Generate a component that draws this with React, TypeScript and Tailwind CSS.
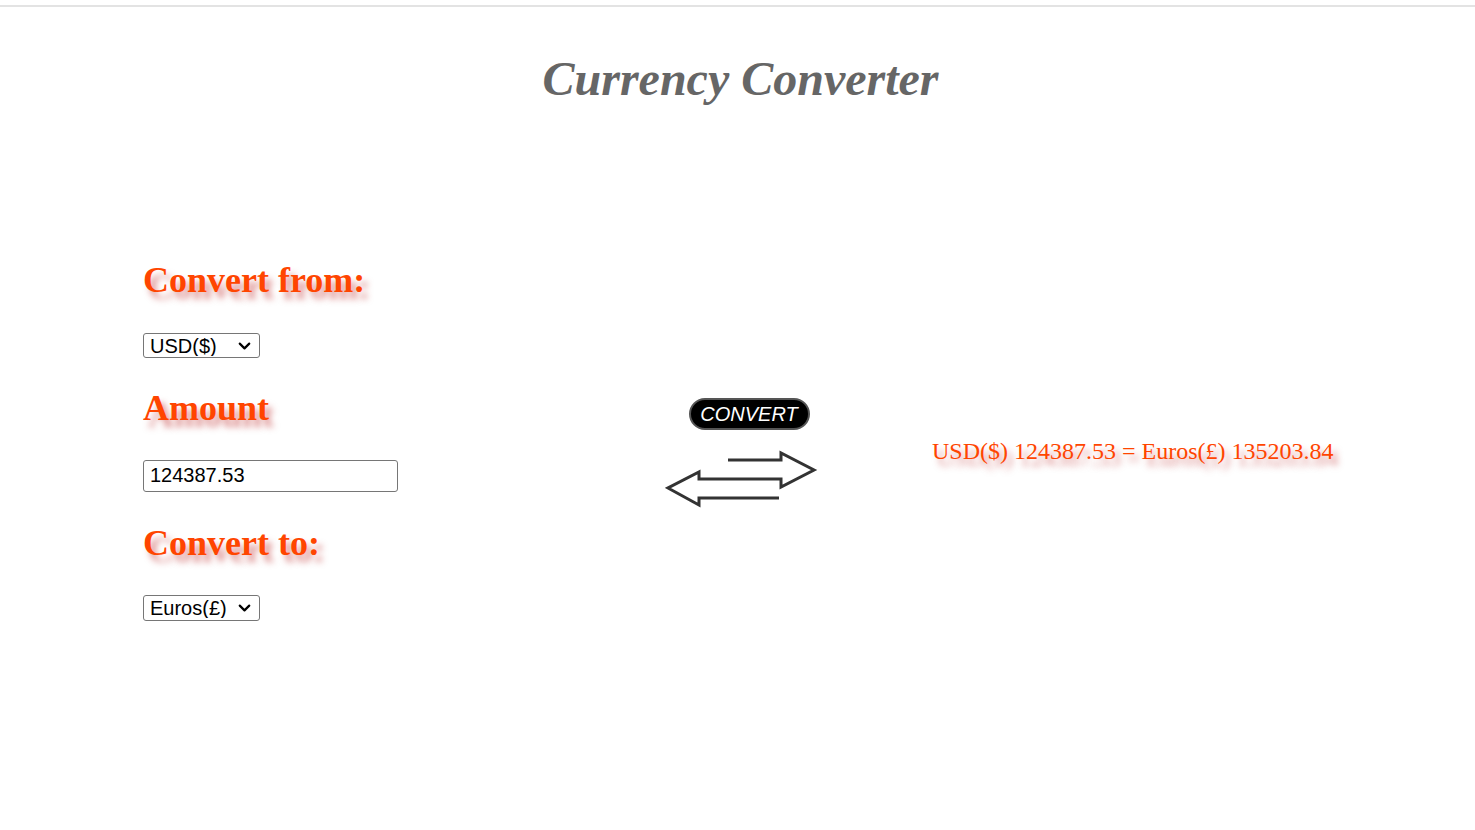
import { useState } from "react"
import { ChevronDown } from "lucide-react"

const labelShadow = "[text-shadow:5px_7px_6px_rgba(190,40,40,0.5)]"

function SwapArrows() {
    return (
        <svg width="154" height="58" viewBox="0 0 154 58" fill="none">
            <path
                d="M63 10 H116 V3 L149 20 L116 37 V29 H34 V22 L3 38 L34 55 V48 H114"
                stroke="#333333"
                strokeWidth="3"
                strokeLinejoin="miter"
            />
        </svg>
    )
}

function CurrencySelect({ value, onChange, height }: { value: string; onChange: (v: string) => void; height: string }) {
    return (
        <div className="relative w-[117px]">
            <select
                value={value}
                onChange={(e) => onChange(e.target.value)}
                className={`${height} w-[117px] appearance-none rounded-[3px] border border-[#767676] bg-white pl-[6px] font-['Liberation_Sans',sans-serif] text-[20px] leading-none text-black`}
            >
                <option value="usd">USD($)</option>
                <option value="eur">Euros(£)</option>
            </select>
            <ChevronDown className="pointer-events-none absolute right-[6px] top-1/2 h-[19px] w-[19px] -translate-y-1/2 text-black" strokeWidth={2.75} />
        </div>
    )
}

function App() {
    const [from, setFrom] = useState("usd")
    const [to, setTo] = useState("eur")
    const [amount, setAmount] = useState("124387.53")

    return (
        <div className="min-h-screen bg-white font-['Liberation_Serif',serif]">
            <div className="h-[5px]" />
            <div className="h-[2px] bg-[#e3e3e3]" />
            <h1 className="mt-[44px] pl-[6px] text-center text-[48px] leading-[56px] font-bold italic text-[#666666]">
                Currency Converter
            </h1>

            <div className="mt-[152px] flex pl-[143px]">
                <div className="w-[523px] flex-none">
                    <h2 className={`text-[36px] leading-[42px] font-bold text-[#ff4500] ${labelShadow}`}>
                        Convert from:
                    </h2>
                    <div className="mt-[32px]">
                        <CurrencySelect value={from} onChange={setFrom} height="h-[25px]" />
                    </div>

                    <h2 className={`mt-[27px] text-[36px] leading-[42px] font-bold text-[#ff4500] ${labelShadow}`}>
                        Amount
                    </h2>
                    <input
                        value={amount}
                        onChange={(e) => setAmount(e.target.value)}
                        className="mt-[31px] block h-[32px] w-[255px] rounded-[3px] border border-[#767676] px-[6px] font-['Liberation_Sans',sans-serif] text-[20px] text-black outline-none"
                    />

                    <h2 className={`mt-[30px] text-[36px] leading-[42px] font-bold text-[#ff4500] ${labelShadow}`}>
                        Convert to:
                    </h2>
                    <div className="mt-[31px]">
                        <CurrencySelect value={to} onChange={setTo} height="h-[26px]" />
                    </div>
                </div>

                <div className="flex w-[154px] flex-none flex-col items-center pt-[139px]">
                    <button className="ml-[12px] h-[32px] w-[121px] rounded-full border-2 border-[#555555] bg-black font-['Liberation_Sans',sans-serif] text-[20px] leading-none text-white italic">
                        CONVERT
                    </button>
                    <div className="-ml-[3px] mt-[20px]">
                        <SwapArrows />
                    </div>
                </div>

                <div className="ml-[112px] pt-[178px]">
                    <p className={`text-[24px] leading-[28px] text-[#ff4500] ${labelShadow}`}>
                        USD($) 124387.53 = Euros(£) 135203.84
                    </p>
                </div>
            </div>
        </div>
    )
}

export default App
